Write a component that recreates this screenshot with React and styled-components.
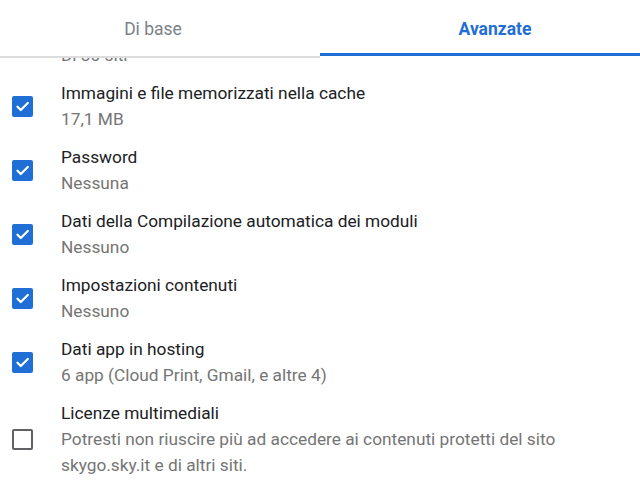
import React, { useLayoutEffect, useRef, useState } from 'react';
import styled, { createGlobalStyle } from 'styled-components';

const GlobalStyle = createGlobalStyle`
  html, body {
    margin: 0;
    padding: 0;
    background: #fff;
  }
  body {
    font-family: Roboto, "Noto Sans", Arial, sans-serif;
    -webkit-font-smoothing: antialiased;
  }
`;

const Dialog = styled.div`
  width: 640px;
  height: 493px;
  display: flex;
  flex-direction: column;
  background: #fff;
  overflow: hidden;
`;

const TabBar = styled.div`
  display: grid;
  grid-template-columns: 1fr 1fr;
  flex: none;
  background: #fff;
`;

const Tab = styled.button`
  height: 58px;
  border: none;
  background: #fff;
  padding: 0 ${(p) => (p.$shift < 0 ? -p.$shift : 0)}px 0 ${(p) => (p.$shift > 0 ? p.$shift : 0)}px;
  font-family: inherit;
  font-size: 17.5px;
  font-weight: ${(p) => (p.$active ? 700 : 400)};
  color: ${(p) => (p.$active ? '#1f6fd6' : '#7d8186')};
  box-shadow: ${(p) =>
    p.$active
      ? 'inset 0 -2px 0 #fff, inset 0 -5px 0 #1f6fd6'
      : 'inset 0 -2px 0 #dcdcdc'};
  cursor: pointer;
`;

const List = styled.div`
  flex: 1;
  overflow: hidden;
`;

const Items = styled.div`
  padding-bottom: 40px;
`;

const Item = styled.label`
  display: flex;
  align-items: center;
  gap: 28px;
  padding: 6px 12px;
  cursor: pointer;
`;

const Box = styled.span`
  flex: none;
  width: 21px;
  height: 21px;
  box-sizing: border-box;
  border-radius: 2px;
  display: flex;
  align-items: center;
  justify-content: center;
  background: ${(p) => (p.$checked ? '#1f6fd6' : '#fff')};
  border: ${(p) => (p.$checked ? 'none' : '2.5px solid #5f6164')};
`;

const Text = styled.div`
  display: flex;
  flex-direction: column;
  min-width: 0;
`;

const Title = styled.div`
  font-size: 17.3px;
  line-height: 26px;
  color: #202124;
`;

const Sub = styled.div`
  font-size: 17.3px;
  line-height: 26px;
  color: #757575;
  max-width: 520px;
`;

const CheckMark = () => (
  <svg width="15" height="15" viewBox="0 0 24 24" fill="none">
    <path d="M4 12.5l5.2 5.2L20.5 6.5" stroke="#fff" strokeWidth="3.6" strokeLinecap="round" strokeLinejoin="round" />
  </svg>
);

const items = [
  { title: 'Cookie e altri dati dei siti', sub: 'Di 30 siti', checked: true },
  { title: 'Immagini e file memorizzati nella cache', sub: '17,1 MB', checked: true },
  { title: 'Password', sub: 'Nessuna', checked: true },
  { title: 'Dati della Compilazione automatica dei moduli', sub: 'Nessuno', checked: true },
  { title: 'Impostazioni contenuti', sub: 'Nessuno', checked: true },
  { title: 'Dati app in hosting', sub: '6 app (Cloud Print, Gmail, e altre 4)', checked: true },
  {
    title: 'Licenze multimediali',
    sub: 'Potresti non riuscire più ad accedere ai contenuti protetti del sito skygo.sky.it e di altri siti.',
    checked: false,
  },
];

const App = () => {
  const listRef = useRef(null);
  const [state, setState] = useState(items.map((i) => i.checked));

  useLayoutEffect(() => {
    if (listRef.current) listRef.current.scrollTop = 48;
  }, []);

  const toggle = (idx) => setState((s) => s.map((v, i) => (i === idx ? !v : v)));

  return (
    <>
      <GlobalStyle />
      <Dialog>
        <TabBar>
          <Tab $shift={-14}>Di base</Tab>
          <Tab $active $shift={30}>Avanzate</Tab>
        </TabBar>
        <List ref={listRef}>
          <Items>
            {items.map((it, idx) => (
              <Item key={it.title} onClick={() => toggle(idx)}>
                <Box $checked={state[idx]}>{state[idx] && <CheckMark />}</Box>
                <Text>
                  <Title>{it.title}</Title>
                  <Sub>{it.sub}</Sub>
                </Text>
              </Item>
            ))}
          </Items>
        </List>
      </Dialog>
    </>
  );
};

export default App;
